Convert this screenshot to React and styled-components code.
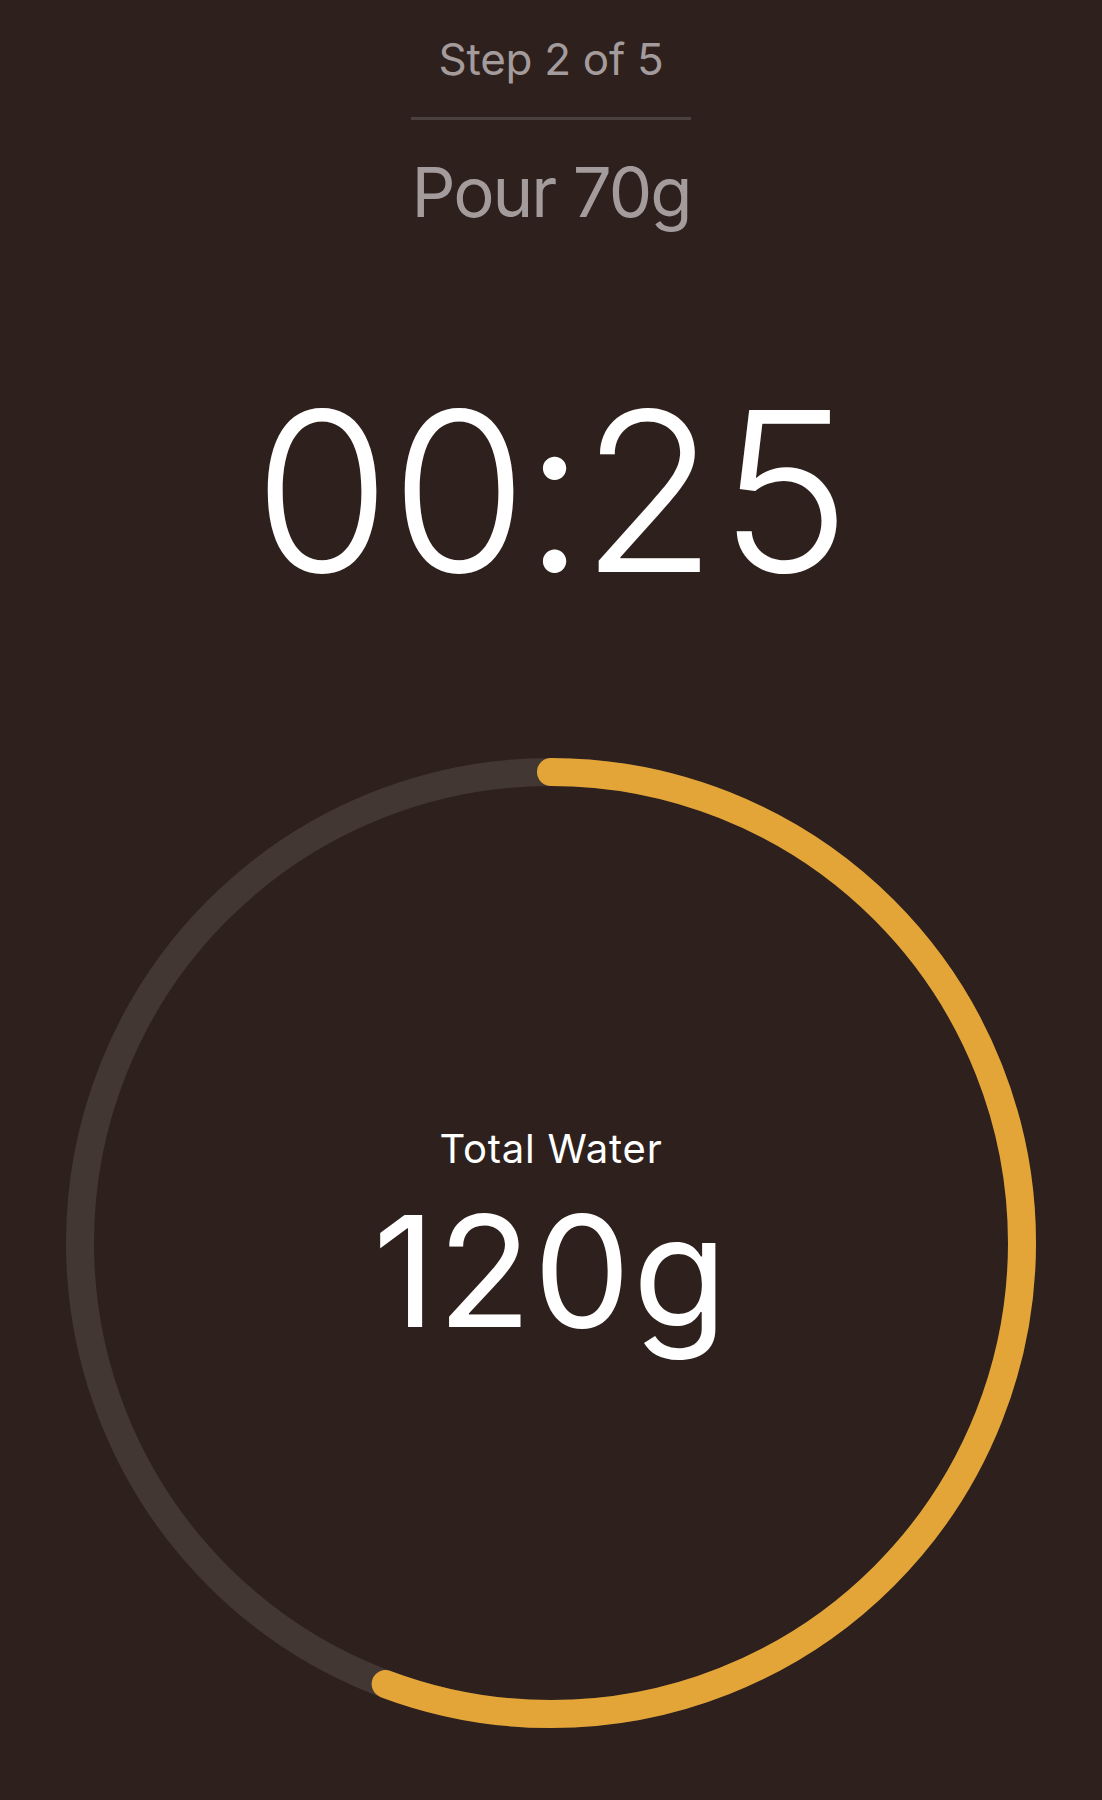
import React from "react";
import styled, { createGlobalStyle } from "styled-components";

const Global = createGlobalStyle`
  html, body {
    margin: 0;
    padding: 0;
    background: #2e201d;
  }
  body {
    font-family: Inter, "Noto Sans", "Liberation Sans", sans-serif;
    -webkit-font-smoothing: antialiased;
  }
`;

const Screen = styled.main`
  width: 1102px;
  min-height: 1800px;
  background: #2e201d;
  display: flex;
  flex-direction: column;
  align-items: center;
  padding-top: 37px;
  box-sizing: border-box;
`;

const StepLabel = styled.div`
  font-size: 44px;
  line-height: 1;
  font-weight: 400;
  color: #a39b9c;
  letter-spacing: -0.3px;
`;

const Divider = styled.div`
  width: 280px;
  height: 3px;
  background: #4a403e;
  margin-top: 36px;
`;

const StepTitle = styled.h1`
  margin: 38px 0 0;
  font-size: 69px;
  line-height: 1;
  font-weight: 400;
  color: #a39b9c;
  letter-spacing: -2px;
`;

const Timer = styled.div`
  margin-top: 154px;
  font-size: 222px;
  line-height: 1;
  font-weight: 300;
  color: #ffffff;
  letter-spacing: -6.5px;
  font-variant-numeric: tabular-nums;
`;

const RingWrap = styled.section`
  margin-top: 155px;
  display: grid;
  width: 970px;
  height: 970px;
  place-items: center;
  > * {
    grid-area: 1 / 1;
  }
`;

const RingSvg = styled.svg`
  width: 970px;
  height: 970px;
  display: block;
`;

const Readout = styled.div`
  display: flex;
  flex-direction: column;
  align-items: center;
  gap: 25px;
  padding-bottom: 10px;
`;

const ReadoutLabel = styled.div`
  font-size: 40px;
  line-height: 1;
  color: #ffffff;
  font-weight: 400;
  letter-spacing: 0.8px;
`;

const ReadoutValue = styled.div`
  font-size: 154px;
  line-height: 1;
  color: #ffffff;
  font-weight: 400;
  letter-spacing: 2px;
`;

function ProgressRing({ progress }) {
  const r = 471;
  const c = 485;
  const circ = 2 * Math.PI * r;
  return (
    <RingSvg viewBox="0 0 970 970">
      <circle cx={c} cy={c} r={r} fill="none" stroke="#433733" strokeWidth="28" />
      <circle
        cx={c}
        cy={c}
        r={r}
        fill="none"
        stroke="#e3a537"
        strokeWidth="28"
        strokeLinecap="round"
        strokeDasharray={`${circ * progress} ${circ}`}
        transform={`rotate(-90 ${c} ${c})`}
      />
    </RingSvg>
  );
}

export default function App() {
  return (
    <>
      <Global />
      <Screen>
        <StepLabel>Step 2 of 5</StepLabel>
        <Divider />
        <StepTitle>Pour 70g</StepTitle>
        <Timer>00:25</Timer>
        <RingWrap>
          <ProgressRing progress={0.557} />
          <Readout>
            <ReadoutLabel>Total Water</ReadoutLabel>
            <ReadoutValue>120g</ReadoutValue>
          </Readout>
        </RingWrap>
      </Screen>
    </>
  );
}
